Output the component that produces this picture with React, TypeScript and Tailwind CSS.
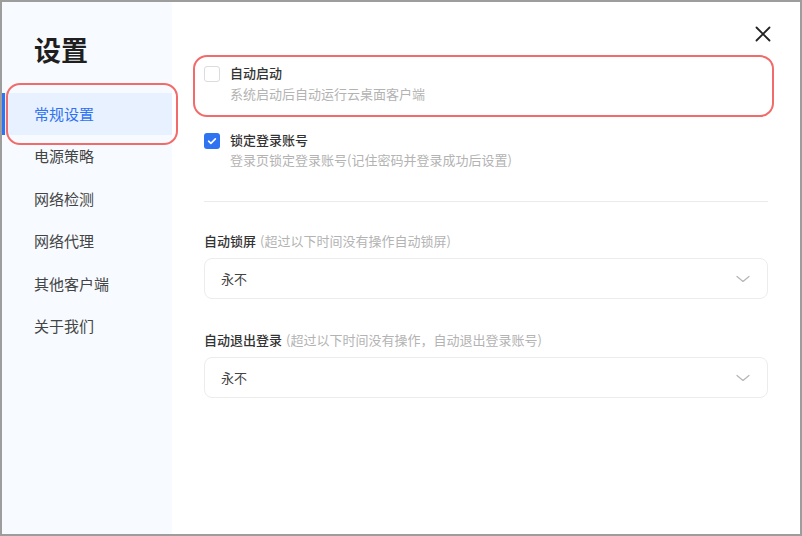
import React, { useState } from "react";

const menu = ["常规设置", "电源策略", "网络检测", "网络代理", "其他客户端", "关于我们"];

function Check({ checked }: { checked: boolean }) {
  return checked ? (
    <span className="flex h-4 w-4 shrink-0 items-center justify-center rounded-[3px] bg-[#2f72f2]">
      <svg viewBox="0 0 16 16" className="h-3 w-3" fill="none" stroke="white" strokeWidth="2.2" strokeLinecap="round" strokeLinejoin="round">
        <path d="M3.5 8.3l3 2.8 6-6" />
      </svg>
    </span>
  ) : (
    <span className="block h-4 w-4 shrink-0 rounded-[3px] border border-[#dcdcdc] bg-white" />
  );
}

function Select({ value }: { value: string }) {
  return (
    <div className="flex h-[41px] items-center justify-between rounded-lg border border-[#ececec] bg-white pl-4 pr-4 text-[13px] text-[#444]">
      <span>{value}</span>
      <svg viewBox="0 0 16 16" className="h-4 w-4" fill="none" stroke="#b5b5b5" strokeWidth="1.2" strokeLinecap="round" strokeLinejoin="round">
        <path d="M2 5.5l6 5 6-5" />
      </svg>
    </div>
  );
}

export default function App() {
  const [active] = useState(0);
  return (
    <div
      className="relative flex h-[536px] w-[802px] overflow-hidden border-2 border-[#9d9d9d] bg-white"
      style={{ fontFamily: '"Noto Sans CJK SC", "Noto Sans", sans-serif' }}
    >
      <aside className="w-[170px] shrink-0 bg-[#f7fbff] pt-[30px]">
        <h1 className="mb-[25px] pl-[32px] text-[27px] font-bold leading-[36px] text-[#1f1f1f]">设置</h1>
        <ul>
          {menu.map((m, i) => (
            <li
              key={m}
              className={
                i === active
                  ? "flex h-[42.4px] items-center border-l-[3px] border-[#2f72f2] bg-[#e8f1ff] pl-[29px] text-[15px] text-[#2f72f2]"
                  : "flex h-[42.4px] items-center pl-[32px] text-[15px] text-[#444]"
              }
            >
              {m}
            </li>
          ))}
        </ul>
      </aside>

      <main className="flex-1 px-[32px] pt-[61px]">
        <button className="absolute right-[29px] top-[24px] text-[#222]">
          <svg viewBox="0 0 16 16" className="h-[16px] w-[16px]" fill="none" stroke="currentColor" strokeWidth="1.8" strokeLinecap="round">
            <path d="M1.5 1.5l13 13M14.5 1.5l-13 13" />
          </svg>
        </button>

        <div className="flex gap-[10px]">
          <div className="pt-[3px]">
            <Check checked={false} />
          </div>
          <div>
            <div className="text-[13px] font-medium leading-[20px] text-[#333]">自动启动</div>
            <div className="mt-[1px] text-[13px] leading-[20px] text-[#b3b3b3]">系统启动后自动运行云桌面客户端</div>
          </div>
        </div>

        <div className="mt-[26px] flex gap-[10px]">
          <div className="pt-[3px]">
            <Check checked />
          </div>
          <div>
            <div className="text-[13px] font-medium leading-[20px] text-[#333]">锁定登录账号</div>
            <div className="text-[13px] leading-[20px] text-[#b3b3b3]">登录页锁定登录账号(记住密码并登录成功后设置)</div>
          </div>
        </div>

        <div className="mt-[31px] h-px bg-[#ebebeb]" />

        <div className="mt-[29px] mb-[7px] text-[13px] leading-[20px]">
          <span className="font-medium text-[#333]">自动锁屏</span>
          <span className="ml-[4px] text-[#b3b3b3]">(超过以下时间没有操作自动锁屏)</span>
        </div>
        <Select value="永不" />

        <div className="mt-[31px] mb-[7px] text-[13px] leading-[20px]">
          <span className="font-medium text-[#333]">自动退出登录</span>
          <span className="ml-[4px] text-[#b3b3b3]">(超过以下时间没有操作，自动退出登录账号)</span>
        </div>
        <Select value="永不" />
      </main>

      {/* annotation outlines */}
      <div className="pointer-events-none absolute left-[4px] top-[81px] h-[62px] w-[172px] rounded-[14px] border-2 border-[#f26b6b]" />
      <div className="pointer-events-none absolute left-[191px] top-[53px] h-[62px] w-[581px] rounded-[14px] border-2 border-[#f26b6b]" />
    </div>
  );
}
